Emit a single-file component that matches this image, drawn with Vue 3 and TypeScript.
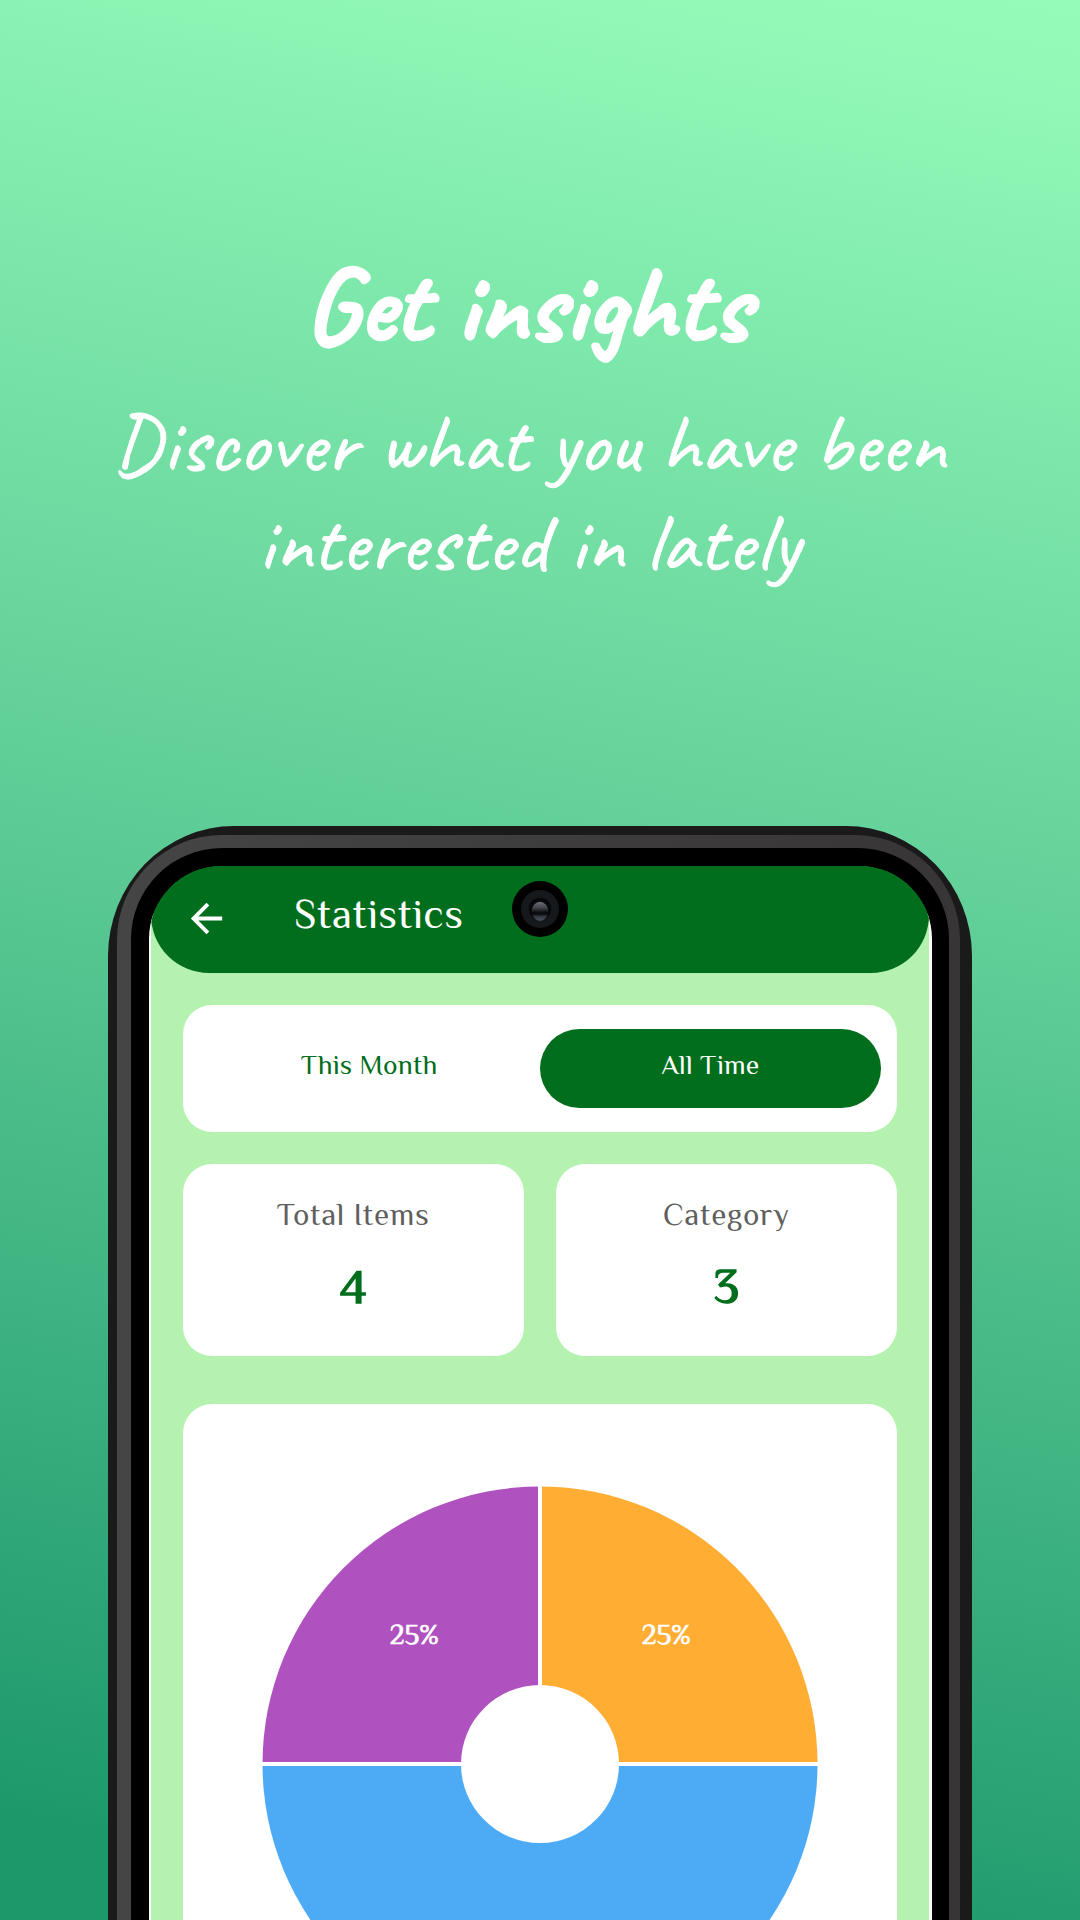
<script setup lang="ts">
interface Stat {
  label: string
  value: number
}

interface Slice {
  color: string
  path: string
  label?: string
  x?: number
  y?: number
}

const stats: Stat[] = [
  { label: 'Total Items', value: 4 },
  { label: 'Category', value: 3 },
]

const slices: Slice[] = [
  { color: '#ffad33', path: 'M280 280V2.5A277.5 277.5 0 0 1 557.5 280Z', label: '25%', x: 406, y: 160 },
  { color: '#4dabf5', path: 'M280 280H557.5A277.5 277.5 0 0 1 2.5 280Z' },
  { color: '#af52bf', path: 'M280 280H2.5A277.5 277.5 0 0 1 280 2.5Z', label: '25%', x: 154, y: 160 },
]
</script>

<template>
  <main class="promo">
    <header class="hero">
      <h1>Get insights</h1>
      <p>Discover what you have been<br />interested in lately</p>
    </header>

    <div class="shell">
      <div class="frame">
        <div class="bezel">
          <div class="display">
            <div class="screen">
              <nav class="app-bar">
                <svg class="back" viewBox="0 0 24 24" aria-hidden="true">
                  <path d="M20 11H7.83l5.59-5.59L12 4l-8 8 8 8 1.41-1.41L7.83 13H20v-2z" fill="#fff" />
                </svg>
                <span class="bar-title">Statistics</span>
                <svg class="camera" viewBox="0 0 56 56" aria-hidden="true">
                  <defs>
                    <linearGradient id="lens" x1="0" y1="0" x2="0" y2="1">
                      <stop offset="0" stop-color="#6c6f76" />
                      <stop offset="0.3" stop-color="#44464c" />
                      <stop offset="0.56" stop-color="#0c0d10" />
                      <stop offset="0.66" stop-color="#0c0d10" />
                      <stop offset="0.74" stop-color="#30323a" />
                      <stop offset="1" stop-color="#505462" />
                    </linearGradient>
                  </defs>
                  <circle cx="28" cy="28" r="28" fill="#000" />
                  <circle cx="28" cy="28" r="19" fill="#16191c" />
                  <circle cx="28" cy="28" r="11.3" fill="#07080c" />
                  <ellipse cx="28" cy="30.3" rx="8.2" ry="9.6" fill="url(#lens)" />
                </svg>
              </nav>

              <section class="tabs">
                <span class="tab">This Month</span>
                <span class="tab active">All Time</span>
              </section>

              <section class="stats">
                <article v-for="stat in stats" :key="stat.label" class="stat">
                  <span class="label">{{ stat.label }}</span>
                  <strong>{{ stat.value }}</strong>
                </article>
              </section>

              <section class="chart">
                <svg width="560" height="560" viewBox="0 0 560 560">
                  <path v-for="slice in slices" :key="slice.color" :d="slice.path" :fill="slice.color" />
                  <path d="M280 0V280M0 280H560" stroke="#fff" stroke-width="4" />
                  <circle cx="280" cy="280" r="79" fill="#fff" />
                  <template v-for="slice in slices" :key="slice.path">
                    <text v-if="slice.label" :x="slice.x" :y="slice.y" class="percent">{{ slice.label }}</text>
                  </template>
                </svg>
              </section>
            </div>
          </div>
        </div>
      </div>
    </div>
  </main>
</template>

<style>
body {
  margin: 0;
}
</style>

<style scoped>
* {
  box-sizing: border-box;
}

.promo {
  width: 1080px;
  height: 1920px;
  overflow: hidden;
  display: flex;
  flex-direction: column;
  align-items: center;
  font-family: Philosopher, Lato, sans-serif;
  background: linear-gradient(191deg, #94fbb9 0%, #91f8b7 5%, #85efb0 14%, #69d59d 39%, #5ecc96 47%, #2aa274 86%, #1c996b 95%);
}

.hero {
  width: 100%;
  height: 826px;
  flex: none;
  padding: 243px 22px 0 0;
  color: #fff;
  text-align: center;
  font-family: Caveat, Lato, cursive;
  font-feature-settings: "calt" 0, "liga" 0;
}

.hero h1 {
  margin: 0;
  padding-right: 4px;
  font-size: 107px;
  line-height: 124px;
  letter-spacing: 0.4px;
  font-weight: 700;
  -webkit-text-stroke: 2.2px currentColor;
}

.hero p {
  margin: 27px 0 0;
  font-size: 83px;
  line-height: 99px;
  letter-spacing: 1.1px;
  font-weight: 400;
  -webkit-text-stroke: 0.9px currentColor;
}

.shell {
  flex: none;
  width: 864px;
  height: 1500px;
  padding: 9px 12px 0 9px;
  border-radius: 126px 126px 0 0 / 130px 130px 0 0;
  background: #1a1a1a;
}

.frame {
  height: 100%;
  padding: 13px 11px 0 14px;
  border-radius: 105px 105px 0 0;
  background: linear-gradient(90deg, #454545, #383536);
}

.bezel {
  height: 100%;
  padding: 18px 17px 0 18px;
  border-radius: 91px 91px 0 0;
  background: #000;
}

.display {
  height: 100%;
  padding: 0 3px 0 2px;
  border-radius: 73px 73px 0 0;
  overflow: hidden;
  background: linear-gradient(#006e1c 48px, #fff 48px);
}

.screen {
  height: 100%;
  background: linear-gradient(#006e1c 48px, #b5f2af 48px);
  padding: 0 32px 0 31.5px;
}

.app-bar {
  position: relative;
  display: flex;
  align-items: center;
  height: 107px;
  margin: 0 -32px 0 -31.5px;
  padding: 0 0 3px 32px;
  border-radius: 0 0 58px 58px;
  background: #006e1c;
  color: #fff;
}

.back {
  width: 47px;
  height: 47px;
}

.bar-title {
  margin-left: 64px;
  font-size: 42px;
  line-height: 50px;
  letter-spacing: 0.6px;
  padding-bottom: 8px;
}

.camera {
  position: absolute;
  left: 361px;
  top: 15px;
  width: 56px;
  height: 56px;
}

.tabs {
  display: flex;
  height: 127px;
  margin-top: 32px;
  padding: 24px 16px;
  border-radius: 29px;
  background: #fff;
}

.tab {
  flex: 1;
  padding-bottom: 8px;
  display: flex;
  align-items: center;
  justify-content: center;
  border-radius: 40px;
  color: #006e1c;
  font-size: 27.5px;
  letter-spacing: 0.3px;
}

.tab.active {
  background: #006e1c;
  color: #fff;
}

.stats {
  display: flex;
  gap: 32px;
  margin-top: 32px;
}

.stat {
  flex: 1;
  height: 192px;
  padding-top: 32px;
  display: flex;
  flex-direction: column;
  align-items: center;
  border-radius: 29px;
  background: #fff;
}

.label {
  font-size: 31px;
  line-height: 38px;
  letter-spacing: 0.7px;
  color: #5f5f5f;
}

.stat strong {
  margin-top: 21px;
  font-size: 48.5px;
  line-height: 64px;
  font-weight: 400;
  -webkit-text-stroke: 1.6px currentColor;
  color: #006e1c;
}

.chart {
  display: flex;
  justify-content: center;
  height: 620px;
  margin-top: 47.5px;
  padding-top: 80.5px;
  border-radius: 29px;
  background: #fff;
}

.percent {
  font-size: 28px;
  fill: #fff;
  stroke: #fff;
  stroke-width: 0.7px;
  text-anchor: middle;
}
</style>
